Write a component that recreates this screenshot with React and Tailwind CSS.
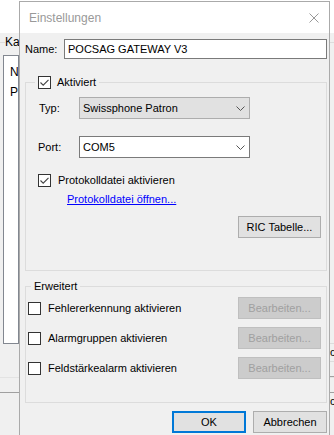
function CheckBox({ checked }) {
  return (
    <span className="w-[13px] h-[13px] shrink-0 border border-[#333333] bg-white flex items-center justify-center">
      {checked && (
        <svg width="11" height="11" viewBox="0 0 11 11">
          <path d="M1.5 5.5 L4.2 8.2 L9.5 2.8" fill="none" stroke="#444444" strokeWidth="1.1" />
        </svg>
      )}
    </span>
  );
}

function Chevron() {
  return (
    <svg width="9" height="5" viewBox="0 0 9 5" className="shrink-0">
      <path d="M0.5 0.5 L4.5 4.5 L8.5 0.5" fill="none" stroke="#555555" strokeWidth="1" />
    </svg>
  );
}

function Button({ children, disabled, primary, className = "" }) {
  const look = disabled
    ? "bg-[#cccccc] border border-[#bfbfbf] text-[#a0a0a0]"
    : primary
    ? "bg-[#e1e1e1] border-2 border-[#0078d7] text-black"
    : "bg-[#e1e1e1] border border-[#adadad] text-black";
  return (
    <div className={`h-[22px] flex items-center justify-center text-[11px] ${look} ${className}`}>
      {children}
    </div>
  );
}

export default function App() {
  return (
    <div
      className="relative w-[334px] h-[435px] overflow-hidden bg-[#f0f0f0] text-[11px] text-black"
      style={{ fontFamily: '"Liberation Sans", Arial, sans-serif' }}
    >
      {/* Window behind the dialog */}
      <div className="h-[33px] bg-white" />
      <div className="relative mt-[3px] w-[19px] h-[12px] overflow-hidden">
        <div className="absolute left-0 right-0 top-[6px] border-t border-[#dcdcdc]" />
        <span className="absolute left-[5px] top-0 bg-[#f0f0f0] pr-[2px] leading-[12px] text-[12px]">Ka</span>
      </div>
      <div className="ml-[3px] mt-[7px] w-[16px] h-[289px] overflow-hidden bg-white border border-[#828790] pl-[6px] pt-[6px] text-[12px] leading-[20px]">
        <div>N</div>
        <div>P</div>
      </div>
      <div className="mt-[33px] border-t border-[#e3e3e3]" />
      <div className="mt-[14px] border-t border-[#a0a0a0]" />

      {/* Right edge of the window behind */}
      <div className="absolute right-0 top-[33px] w-[5px] h-[402px] overflow-hidden border-l border-[#c8c8c8] flex flex-col">
        <div className="mt-[9px] border-t border-[#dcdcdc]" />
        <div className="mt-[300px] border-t border-[#dcdcdc]" />
        <div className="h-[17px] text-[11px] leading-[17px]">c</div>
        <div className="border-t border-[#dcdcdc]" />
        <div className="mt-[14px] border-t border-[#a0a0a0]" />
        <div className="mt-[14px] h-[20px] text-[11px] leading-[20px]">c</div>
      </div>

      {/* Dialog window */}
      <div className="absolute left-[19px] top-[1px] w-[311px] h-[450px] border border-[#aaaaaa] bg-[#f0f0f0] flex flex-col">
        {/* Title bar */}
        <div className="h-[31px] bg-white flex items-center justify-between pl-[9px] pr-[9px]">
          <span className="text-[12px] text-[#999999] pt-[1px]">Einstellungen</span>
          <svg width="10" height="10" viewBox="0 0 10 10" className="mt-[1px] mr-[1px]">
            <path d="M0.5 0.5 L9.5 9.5 M9.5 0.5 L0.5 9.5" stroke="#999999" strokeWidth="1" />
          </svg>
        </div>

        {/* Name */}
        <div className="mt-[6px] flex items-center">
          <span className="w-[44px] pl-[5px]">Name:</span>
          <div className="w-[263px] h-[20px] bg-white border border-[#7a7a7a] flex items-center pl-[3px]">
            POCSAG GATEWAY V3
          </div>
        </div>

        {/* Group 1 */}
        <div className="relative ml-[5px] mt-[23px] w-[302px] h-[189px] border border-[#dcdcdc] flex flex-col">
          <div className="absolute left-[9px] top-[-8px] px-[3px] bg-[#f0f0f0] flex items-center gap-[6px]">
            <CheckBox checked />
            <span className="leading-[15px]">Aktiviert</span>
          </div>

          <div className="mt-[14px] flex items-center">
            <span className="w-[53px] pl-[13px]">Typ:</span>
            <div className="w-[171px] h-[22px] bg-[#e1e1e1] border border-[#adadad] flex items-center justify-between pl-[3px] pr-[4px]">
              <span>Swissphone Patron</span>
              <Chevron />
            </div>
          </div>

          <div className="mt-[17px] flex items-center">
            <span className="w-[53px] pl-[12px]">Port:</span>
            <div className="w-[171px] h-[22px] bg-white border border-[#7a7a7a] flex items-center justify-between pl-[3px] pr-[4px]">
              <span>COM5</span>
              <Chevron />
            </div>
          </div>

          <div className="mt-[16px] pl-[12px] flex items-center gap-[7px]">
            <CheckBox checked />
            <span className="leading-[13px]">Protokolldatei aktivieren</span>
          </div>

          <div className="mt-[5px] pl-[41px] leading-[15px] text-[#0000ff] underline">
            Protokolldatei öffnen...
          </div>

          <div className="mt-[9px] flex justify-end pr-[5px]">
            <Button className="w-[83px]">RIC Tabelle...</Button>
          </div>
        </div>

        {/* Group 2 */}
        <div className="relative ml-[5px] mt-[15px] w-[302px] h-[117px] border border-[#dcdcdc] flex flex-col gap-[8px] pt-[10px]">
          <span className="absolute left-[5px] top-[-8px] px-[3px] bg-[#f0f0f0] leading-[15px]">Erweitert</span>
          {["Fehlererkennung aktivieren", "Alarmgruppen aktivieren", "Feldstärkealarm aktivieren"].map((label) => (
            <div key={label} className="flex items-center justify-between pl-[2px] pr-[5px]">
              <div className="flex items-center gap-[7px]">
                <CheckBox />
                <span>{label}</span>
              </div>
              <Button disabled className="w-[83px]">Bearbeiten...</Button>
            </div>
          ))}
        </div>

        {/* Dialog buttons */}
        <div className="mt-[8px] flex justify-end gap-[7px] pr-[2px]">
          <Button primary className="w-[74px]">OK</Button>
          <Button className="w-[74px]">Abbrechen</Button>
        </div>
      </div>
    </div>
  );
}
